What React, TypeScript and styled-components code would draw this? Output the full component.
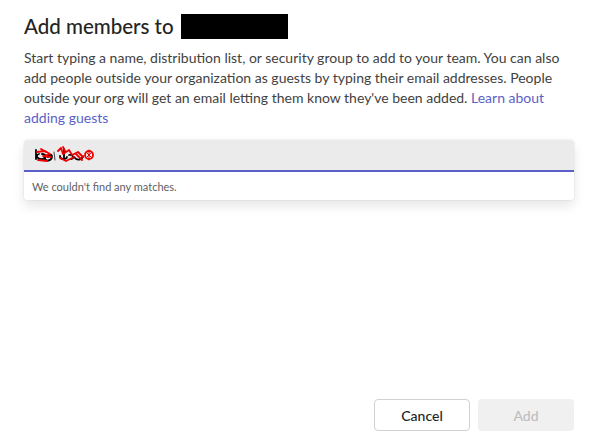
import React from "react";
import styled, { createGlobalStyle } from "styled-components";

const GlobalStyle = createGlobalStyle`
  html, body {
    margin: 0;
    padding: 0;
    background: #fff;
  }
  body {
    font-family: "Segoe UI", Lato, "Noto Sans", sans-serif;
    color: #242424;
  }
`;

const Dialog = styled.div`
  width: 598px;
  height: 439px;
  box-sizing: border-box;
  padding: 12px 24px 8px 24px;
  display: flex;
  flex-direction: column;
  background: #fff;
`;

const Title = styled.h2`
  margin: 0;
  display: flex;
  align-items: center;
  gap: 7px;
  font-size: 20.5px;
  font-weight: 500;
  line-height: 28px;
  color: #242424;
`;

const Redacted = styled.span`
  display: inline-block;
  width: 107px;
  height: 25px;
  background: #000;
`;

const Description = styled.p`
  margin: 8px 0 0 0;
  font-size: 14px;
  line-height: 20px;
  color: #424242;
`;

const Link = styled.a`
  color: #5b5fc7;
  text-decoration: none;
  cursor: pointer;
`;

const Picker = styled.div`
  margin-top: 12px;
  border-radius: 4px;
  box-shadow: 0 6px 12px rgba(0, 0, 0, 0.1), 0 0 2px rgba(0, 0, 0, 0.12);
`;

const SearchBox = styled.div`
  height: 30px;
  background: #ebebeb;
  border-radius: 4px 4px 0 0;
  border-bottom: 2px solid #5b5fc7;
  display: flex;
  align-items: center;
  padding: 0 9px;
`;

const NoMatches = styled.div`
  height: 28px;
  display: flex;
  align-items: center;
  padding: 0 8px;
  font-size: 11px;
  color: #616161;
  background: #fff;
  border-radius: 0 0 4px 4px;
`;

const Spacer = styled.div`
  flex: 1;
`;

const Footer = styled.div`
  display: flex;
  justify-content: flex-end;
  gap: 8px;
`;

const Button = styled.button<{ $primary?: boolean }>`
  width: 96px;
  height: 32px;
  box-sizing: border-box;
  border-radius: 4px;
  font-family: inherit;
  font-size: 14px;
  font-weight: 500;
  border: 1px solid ${(p) => (p.$primary ? "transparent" : "#d1d1d1")};
  background: ${(p) => (p.$primary ? "#f0f0f0" : "#fff")};
  color: ${(p) => (p.$primary ? "#bdbdbd" : "#242424")};
`;

const Scribble = () => (
  <svg width="70" height="18" viewBox="0 0 70 18">
    <g fill="none" strokeWidth="1.8" strokeLinecap="round" strokeLinejoin="round">
      <path d="M3 4 L3 13 M6 8 C2 9 4 14 10 13 C14 12 13 8 9 8 M11 12 C13 16 18 15 19 11 C19 8 15 8 15 11" stroke="#000" />
      <path d="M4 6 L12 5 L17 8 L10 10 L18 11 M5 14 L14 15 M8 3 L13 6" stroke="#e00" />
      <path d="M21 6 L22 14" stroke="#444" strokeWidth="1" />
      <path d="M27 10 C27 14 33 14 34 11 M31 3 L31 12 M36 9 C40 8 42 13 38 13 M41 11 C44 15 49 14 50 10" stroke="#000" />
      <path d="M25 5 L28 2 L30 8 L36 4 L39 9 L45 6 L50 11 M27 12 L33 15 L41 11 M43 8 L49 14 M30 1 L32 5" stroke="#e00" />
      <circle cx="56" cy="9" r="4" stroke="#e00" />
      <path d="M54 7 L58 11 M58 7 L54 11 M56 4 L56 14" stroke="#e00" strokeWidth="1" />
    </g>
  </svg>
);

export default function App() {
  return (
    <>
      <GlobalStyle />
      <Dialog>
        <Title>
          Add members to <Redacted />
        </Title>
        <Description>
          Start typing a name, distribution list, or security group to add to
          your team. You can also add people outside your organization as
          guests by typing their email addresses. People outside your org will
          get an email letting them know they've been added.{" "}
          <Link>Learn about adding guests</Link>
        </Description>
        <Picker>
          <SearchBox>
            <Scribble />
          </SearchBox>
          <NoMatches>We couldn't find any matches.</NoMatches>
        </Picker>
        <Spacer />
        <Footer>
          <Button>Cancel</Button>
          <Button $primary disabled>
            Add
          </Button>
        </Footer>
      </Dialog>
    </>
  );
}
